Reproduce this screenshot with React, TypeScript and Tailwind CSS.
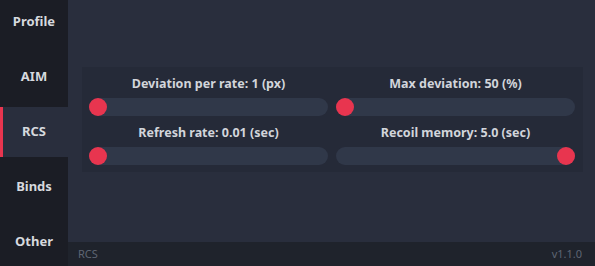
import React from "react";

const tabs = ["Profile", "AIM", "RCS", "Binds", "Other"];

function Slider({ label, pct }: { label: string; pct: number }) {
  return (
    <div className="flex flex-col">
      <div className="h-[18px] leading-[18px] text-center text-[12.5px] font-bold text-[#d2d5db] mb-[5px]">
        {label}
      </div>
      <div className="relative h-[18px] rounded-full bg-[#303849]">
        <div
          className="absolute top-0 h-[18px] w-[18px] rounded-full bg-[#e8354f]"
          style={{ left: `calc((100% - 18px) * ${pct})` }}
        />
      </div>
    </div>
  );
}

export default function App() {
  return (
    <div
      className="flex w-[595px] h-[266px] bg-[#1b1d25] overflow-hidden"
      style={{ fontFamily: '"Noto Sans", "Open Sans", sans-serif' }}
    >
      <div className="w-[68px] shrink-0 flex flex-col gap-[5px] -mt-[3px]">
        {tabs.map((t) => {
          const active = t === "RCS";
          return (
            <div
              key={t}
              className={
                "relative h-[50px] shrink-0 flex items-center justify-center text-[13px] font-bold text-[#d6d9de] " +
                (active ? "bg-[#292e3d]" : "bg-[#1b1d25]")
              }
            >
              {active && <div className="absolute left-0 top-0 bottom-0 w-[3px] bg-[#e8354f]" />}
              {t}
            </div>
          );
        })}
      </div>
      <div className="flex-1 flex flex-col bg-[#292e3d]">
        <div className="flex-1 pt-[67px] pl-[14px] pr-[12px]">
          <div className="bg-[#252a38] pt-[8px] pb-[7px] pl-[7px] pr-[8px] grid grid-cols-2 gap-x-[8px] gap-y-[8px]">
            <Slider label="Deviation per rate: 1 (px)" pct={0} />
            <Slider label="Max deviation: 50 (%)" pct={0} />
            <Slider label="Refresh rate: 0.01 (sec)" pct={0} />
            <Slider label="Recoil memory: 5.0 (sec)" pct={1} />
          </div>
        </div>
        <div className="h-[24px] shrink-0 bg-[#1f232c] flex items-center justify-between pl-[10px] pr-[13px] text-[11px] text-[#5e6573]">
          <span>RCS</span>
          <span>v1.1.0</span>
        </div>
      </div>
    </div>
  );
}
